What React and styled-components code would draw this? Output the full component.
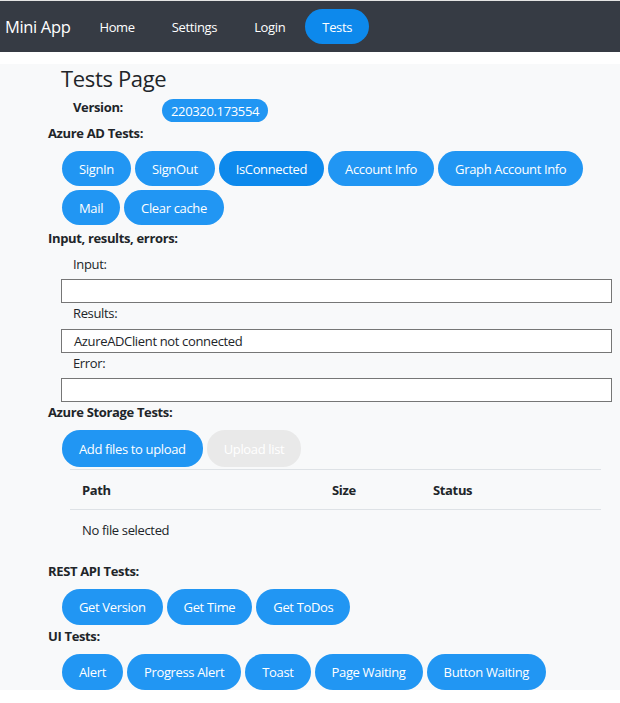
import React from "react";
import styled, { createGlobalStyle } from "styled-components";

const GlobalStyle = createGlobalStyle`
  html, body {
    margin: 0;
    padding: 0;
    background: #ffffff;
    font-family: "Open Sans", "Noto Sans", sans-serif;
    letter-spacing: -0.35px;
    color: #212529;
  }
`;

const NavBar = styled.nav`
  display: flex;
  align-items: center;
  height: 51px;
  border-top: 1px solid #e4e4e4;
  background: #363b44;
  padding-left: 5px;
`;

const Brand = styled.div`
  color: #ffffff;
  font-size: 16.5px;
  margin-right: 12px;
`;

const NavLink = styled.div`
  display: flex;
  align-items: center;
  height: 35px;
  padding: 0 17px;
  margin-right: 3px;
  border-radius: 18px;
  font-size: 13px;
  color: #ffffff;
  background: ${(p) => (p.active ? "#0d89ec" : "transparent")};
`;

const Page = styled.main`
  margin-top: 12px;
  background: #f8f9fa;
  padding: 0 8px 0 48px;
  display: flex;
  flex-direction: column;
`;

const Title = styled.h1`
  margin: 0 0 0 13px;
  font-size: 22px;
  font-weight: 500;
  line-height: 28px;
`;

const VersionRow = styled.div`
  display: flex;
  align-items: flex-start;
  margin: 6px 0 0 25px;
`;

const VersionLabel = styled.span`
  font-size: 13px;
  font-weight: 700;
  line-height: 18px;
  width: 89px;
`;

const Badge = styled.span`
  display: inline-flex;
  align-items: center;
  height: 23px;
  padding: 0 9px;
  margin-top: 1px;
  border-radius: 12px;
  background: #2196f3;
  color: #ffffff;
  font-size: 13px;
`;

const SectionLabel = styled.div`
  font-size: 13px;
  font-weight: 700;
  line-height: 18px;
  margin-top: ${(p) => p.top || 2}px;
`;

const ButtonGroup = styled.div`
  display: flex;
  flex-wrap: wrap;
  gap: 4px 4px;
  margin: 9px 0 0 14px;
`;

const PillButton = styled.button`
  height: ${(p) => p.h || 35}px;
  padding: 0 17px;
  border: none;
  border-radius: 18px;
  font-family: inherit;
  font-size: 13px;
  letter-spacing: -0.35px;
  color: #ffffff;
  background: ${(p) =>
    p.disabled ? "#e9e9e9" : p.active ? "#0d89ec" : "#2196f3"};
  cursor: pointer;
`;

const FieldLabel = styled.div`
  font-size: 13px;
  line-height: 18px;
  margin: ${(p) => p.top || 1}px 0 0 25px;
`;

const Field = styled.div`
  box-sizing: border-box;
  height: 24px;
  margin: ${(p) => p.top || 6}px 0 0 13px;
  border: 1px solid #767676;
  background: #ffffff;
  padding-left: 12px;
  font-size: 13px;
  line-height: 22px;
`;

const Table = styled.table`
  margin: 2px 11px 0 22px;
  border-collapse: collapse;
  font-size: 13px;
`;

const HeadCell = styled.th`
  text-align: left;
  font-weight: 700;
  height: 39px;
  padding: 0 12px;
  border-top: 1px solid #dee2e6;
  border-bottom: 1px solid #dee2e6;
  width: ${(p) => p.w}px;
`;

const Cell = styled.td`
  height: 40px;
  padding: 0 12px;
`;

const adButtons = [
  "SignIn",
  "SignOut",
  "IsConnected",
  "Account Info",
  "Graph Account Info",
  "Mail",
  "Clear cache",
];
const restButtons = ["Get Version", "Get Time", "Get ToDos"];
const uiButtons = ["Alert", "Progress Alert", "Toast", "Page Waiting", "Button Waiting"];

export default function App() {
  return (
    <>
      <GlobalStyle />
      <NavBar>
        <Brand>Mini App</Brand>
        <NavLink>Home</NavLink>
        <NavLink>Settings</NavLink>
        <NavLink>Login</NavLink>
        <NavLink active>Tests</NavLink>
      </NavBar>
      <Page>
        <Title>Tests Page</Title>
        <VersionRow>
          <VersionLabel>Version:</VersionLabel>
          <Badge>220320.173554</Badge>
        </VersionRow>

        <SectionLabel>Azure AD Tests:</SectionLabel>
        <ButtonGroup>
          {adButtons.map((b) => (
            <PillButton key={b} active={b === "IsConnected"}>
              {b}
            </PillButton>
          ))}
        </ButtonGroup>

        <SectionLabel top={4}>Input, results, errors:</SectionLabel>
        <FieldLabel top={8}>Input:</FieldLabel>
        <Field />
        <FieldLabel>Results:</FieldLabel>
        <Field top={7}>AzureADClient not connected</Field>
        <FieldLabel>Error:</FieldLabel>
        <Field />

        <SectionLabel top={1}>Azure Storage Tests:</SectionLabel>
        <ButtonGroup>
          <PillButton h={37}>Add files to upload</PillButton>
          <PillButton h={37} disabled>
            Upload list
          </PillButton>
        </ButtonGroup>
        <Table>
          <thead>
            <tr>
              <HeadCell w={226}>Path</HeadCell>
              <HeadCell w={77}>Size</HeadCell>
              <HeadCell>Status</HeadCell>
            </tr>
          </thead>
          <tbody>
            <tr>
              <Cell colSpan={3}>No file selected</Cell>
            </tr>
          </tbody>
        </Table>

        <SectionLabel top={12}>REST API Tests:</SectionLabel>
        <ButtonGroup>
          {restButtons.map((b) => (
            <PillButton key={b} h={36}>
              {b}
            </PillButton>
          ))}
        </ButtonGroup>

        <SectionLabel top={2}>UI Tests:</SectionLabel>
        <ButtonGroup>
          {uiButtons.map((b) => (
            <PillButton key={b} h={36}>
              {b}
            </PillButton>
          ))}
        </ButtonGroup>
      </Page>
    </>
  );
}
